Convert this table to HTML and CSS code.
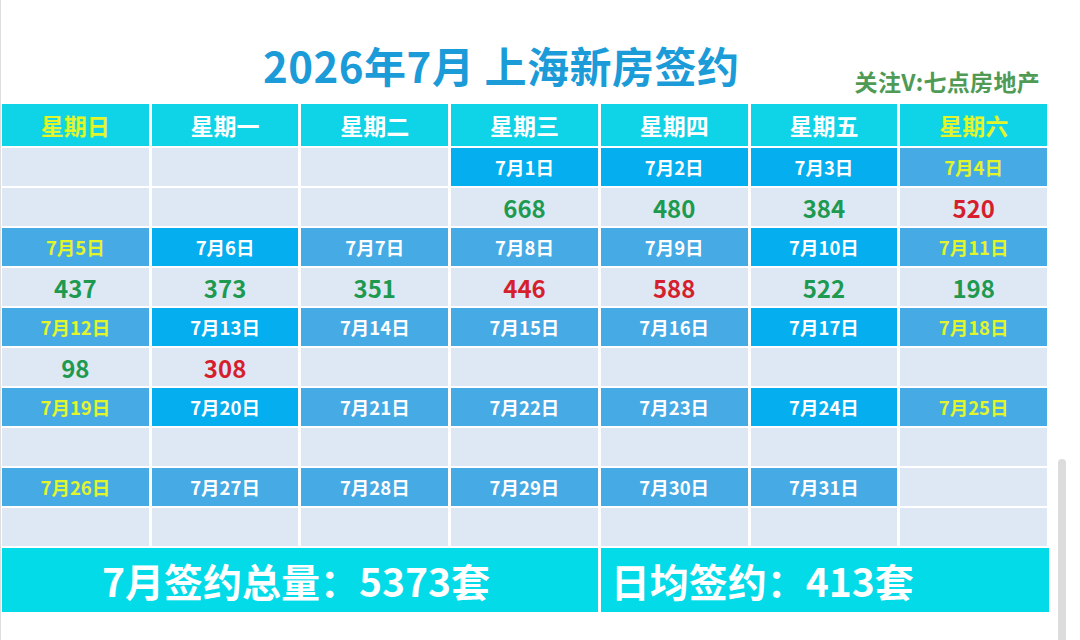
FILE: index.html
```html
<!DOCTYPE html>
<html lang="zh-CN">
<head>
<meta charset="utf-8">
<title>2026年7月 上海新房签约</title>
<link rel="stylesheet" href="styles.css">
</head>
<body>
<div class="page">
  <header class="top">
    <h1 class="title">2026年7月 上海新房签约</h1>
    <div class="follow">关注V:七点房地产</div>
  </header>
  <div class="cal">
    <div class="hd wk">星期日</div><div class="hd">星期一</div><div class="hd">星期二</div><div class="hd">星期三</div><div class="hd">星期四</div><div class="hd">星期五</div><div class="hd wk">星期六</div>

    <div class="cell"></div><div class="cell"></div><div class="cell"></div><div class="date hi">7月1日</div><div class="date hi">7月2日</div><div class="date hi">7月3日</div><div class="date wk">7月4日</div>
    <div class="cell"></div><div class="cell"></div><div class="cell"></div><div class="cell up">668</div><div class="cell up">480</div><div class="cell up">384</div><div class="cell dn">520</div>

    <div class="date wk">7月5日</div><div class="date hi">7月6日</div><div class="date">7月7日</div><div class="date">7月8日</div><div class="date">7月9日</div><div class="date hi">7月10日</div><div class="date wk">7月11日</div>
    <div class="cell up">437</div><div class="cell up">373</div><div class="cell up">351</div><div class="cell dn">446</div><div class="cell dn">588</div><div class="cell up">522</div><div class="cell up">198</div>

    <div class="date wk">7月12日</div><div class="date hi">7月13日</div><div class="date">7月14日</div><div class="date">7月15日</div><div class="date">7月16日</div><div class="date hi">7月17日</div><div class="date wk">7月18日</div>
    <div class="cell up">98</div><div class="cell dn">308</div><div class="cell"></div><div class="cell"></div><div class="cell"></div><div class="cell"></div><div class="cell"></div>

    <div class="date wk">7月19日</div><div class="date hi">7月20日</div><div class="date">7月21日</div><div class="date">7月22日</div><div class="date">7月23日</div><div class="date hi">7月24日</div><div class="date wk">7月25日</div>
    <div class="cell"></div><div class="cell"></div><div class="cell"></div><div class="cell"></div><div class="cell"></div><div class="cell"></div><div class="cell"></div>

    <div class="date wk">7月26日</div><div class="date">7月27日</div><div class="date">7月28日</div><div class="date">7月29日</div><div class="date">7月30日</div><div class="date">7月31日</div><div class="cell"></div>
    <div class="cell"></div><div class="cell"></div><div class="cell"></div><div class="cell"></div><div class="cell"></div><div class="cell"></div><div class="cell"></div>

    <div class="sum total">7月签约总量：5373套</div>
    <div class="sum avg">日均签约：413套</div>
  </div>
  <div class="scrollbar"></div>
</div>
</body>
</html>
```
FILE: styles.css
```css
html, body {
  margin: 0;
  padding: 0;
  background: #ffffff;
}
body {
  font-family: "Noto Sans CJK SC", "Noto Sans", sans-serif;
  width: 1080px;
  height: 640px;
  overflow: hidden;
}
.page {
  position: relative;
  height: 640px;
  border-left: 1px solid #dedede;
  padding-left: 1px;
  box-sizing: border-box;
}
.top {
  height: 104px;
  display: flex;
  align-items: flex-start;
  justify-content: space-between;
  width: 1045px;
}
.title {
  margin: 44px 0 0 261px;
  font-size: 42px;
  line-height: 42px;
  font-weight: 700;
  color: #1b9bd8;
  letter-spacing: 0.5px;
}
.follow {
  margin: 69px 7px 0 0;
  font-size: 23px;
  line-height: 24px;
  font-weight: 700;
  color: #4f9b55;
  letter-spacing: 0.3px;
}
.cal {
  width: 1045px;
  display: grid;
  grid-template-columns: repeat(7, 1fr);
  grid-template-rows: 42px repeat(10, 38px) 64px;
  column-gap: 3px;
  row-gap: 2px;
}
.cal > div {
  display: flex;
  align-items: center;
  justify-content: center;
  font-weight: 700;
}
.hd {
  background: #0fd4e7;
  color: #ffffff;
  font-size: 23px;
}
.hd.wk { color: #e2f52b; }
.date {
  background: #46aae4;
  color: #ffffff;
  font-size: 18.5px;
}
.date.hi { background: #04aeef; }
.date.wk { color: #e2f52b; }
.cell {
  background: #dde8f4;
  font-size: 24px;
}
.cell.up { color: #1d9a50; }
.cell.dn { color: #d61f2d; }
.sum {
  background: #03dbe9;
  color: #ffffff;
  font-size: 39px;
}
.cal > .total {
  grid-column: 1 / span 4;
  padding-right: 8px;
}
.cal > .avg {
  grid-column: 5 / span 3;
  justify-content: flex-start;
  padding-left: 10px;
  margin-right: -2px;
}
.scrollbar {
  position: absolute;
  left: 1057px;
  top: 459px;
  width: 8px;
  height: 200px;
  border-radius: 4px;
  background: #dcdcdc;
}
```
